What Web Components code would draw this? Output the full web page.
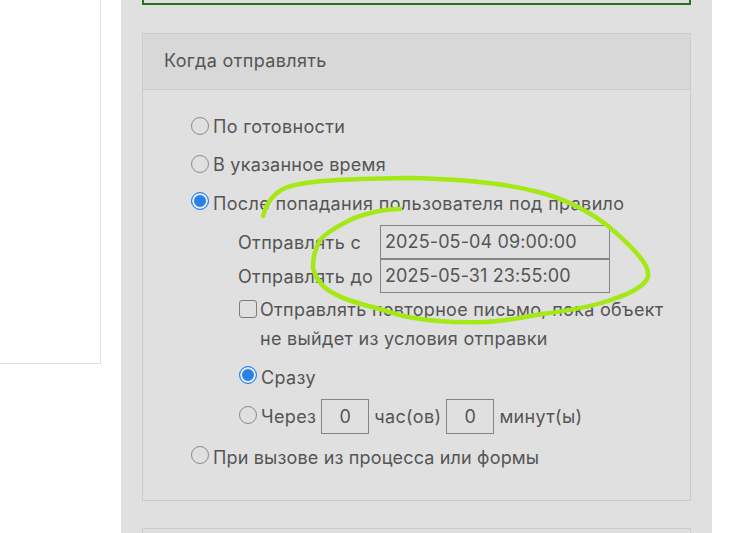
<!DOCTYPE html>
<html lang="ru">
<head>
<meta charset="utf-8">
<title>Когда отправлять</title>
<style>
  html, body { margin: 0; padding: 0; height: 533px; overflow: hidden; background: #fff; }
  body { font-family: Inter, "Noto Sans", sans-serif; font-size: 18px; letter-spacing: .35px; color: #555; }
</style>
</head>
<body>

<settings-page>
  <send-card title="Когда отправлять">
    <choice-row>По готовности</choice-row>
    <choice-row style="--h:39px;letter-spacing:.23px">В указанное время</choice-row>
    <choice-row checked style="--h:39px;--dot:-5px;margin-bottom:2px">После попадания пользователя под правило</choice-row>
    <sub-block>
      <date-row label="Отправлять с" value="2025-05-04 09:00:00"></date-row>
      <date-row label="Отправлять до" value="2025-05-31 23:55:00"></date-row>
      <check-row>Отправлять повторное письмо, пока объект<br>не выйдет из условия отправки</check-row>
      <choice-row checked style="--h:38px;--dot:-4px">Сразу</choice-row>
      <choice-row style="--h:40px;--dot:-2px">Через<num-box></num-box>час(ов)<num-box></num-box>минут(ы)</choice-row>
    </sub-block>
    <choice-row style="--h:42px;--dot:-4px;letter-spacing:.16px">При вызове из процесса или формы</choice-row>
  </send-card>
</settings-page>

<script>
class SettingsPage extends HTMLElement {
    constructor() {
        super();
        this.attachShadow({mode: "open"}).innerHTML = `
          <style>
            :host { display: grid; grid-template-columns: 101px 20px 591px 1fr; height: 533px; position: relative; overflow: hidden; }
            .side { height: 364px; box-sizing: border-box; background: #fff; border-right: 1px solid #ddd; border-bottom: 1px solid #ddd; }
            .main { grid-column: 3; background: #e0e0e0; padding: 0 21px; height: 533px; overflow: hidden; box-sizing: border-box; }
            .green { height: 5px; box-sizing: border-box; border: 2px solid #2a6f2a; border-top: 0; margin-bottom: 28px; }
            .next { height: 40px; box-sizing: border-box; border: 1px solid #ccc; margin-top: 27px; }
            svg { position: absolute; left: 0; top: 0; pointer-events: none; }
          </style>
          <div class="side"></div>
          <div class="main">
            <div class="green"></div>
            <slot></slot>
            <div class="next"></div>
          </div>
          <svg width="755" height="533" viewBox="0 0 755 533" fill="none">
            <path d="M263 216 C266 205 272 194 285 188 C302 181 340 179 408 178 C465 179 510 184 542 193 C570 201 590 212 608 226 C627 242 640 255 646 266 C650 275 648 280 642 285 C632 293 622 296 608 301 C590 307 565 311 542 314 C520 318 505 321 485 322 C455 323 430 321 408 317 C395 314 390 312 380 309 C360 304 345 300 333 293 C322 287 315 278 313 267 C313 255 316 248 320 240 C327 232 338 226 350 220 C362 214 385 209 400 209" stroke="#a4e816" stroke-width="4.500" stroke-linecap="round" stroke-linejoin="round"/>
          </svg>`;
    }
}

class SendCard extends HTMLElement {
    constructor() {
        super();
        this.attachShadow({mode: "open"}).innerHTML = `
          <style>
            :host { display: block; box-sizing: border-box; height: 468px; border: 1px solid #ccc; }
            .head { height: 56px; box-sizing: border-box; background: #d8d8d8; border-bottom: 1px solid #ccc; padding: 0 21px; line-height: 54px; }
            .body { padding: 17px 0 0 47px; }
          </style>
          <div class="head"></div>
          <div class="body"><slot></slot></div>`;
    }
    connectedCallback() {
        this.shadowRoot.querySelector(".head").textContent = this.getAttribute("title");
    }
}

class ChoiceRow extends HTMLElement {
    constructor() {
        super();
        this.attachShadow({mode: "open"}).innerHTML = `
          <style>
            :host { display: flex; align-items: center; gap: 4px; height: var(--h, 38px); white-space: nowrap; }
            .dot { flex: none; width: 18px; height: 18px; box-sizing: border-box; border-radius: 50%; border: 1.500px solid #8a8a8a; margin-top: var(--dot, -1px); margin-left: 1px; }
            :host([checked]) .dot { border-color: #2b80e6; background: #2b80e6; box-shadow: inset 0 0 0 2px #e8eef6; }
            .text { display: flex; align-items: center; gap: 5px; }
          </style>
          <span class="dot"></span><span class="text"><slot></slot></span>`;
    }
}

class SubBlock extends HTMLElement {
    constructor() {
        super();
        this.attachShadow({mode: "open"}).innerHTML = `
          <style>
            :host { display: block; padding-left: 48px; --dot: -1px; }
          </style>
          <slot></slot>`;
    }
}

class DateRow extends HTMLElement {
    constructor() {
        super();
        this.attachShadow({mode: "open"}).innerHTML = `
          <style>
            :host { display: flex; align-items: center; height: 34px; white-space: nowrap; }
            .label { width: 142px; flex: none; }
            .box { width: 230px; height: 34px; box-sizing: border-box; border: 1px solid #858585; padding: 0 4px; line-height: 32px; letter-spacing: .12px; }
          </style>
          <span class="label"></span><span class="box"></span>`;
    }
    connectedCallback() {
        this.shadowRoot.querySelector(".label").textContent = this.getAttribute("label");
        this.shadowRoot.querySelector(".box").textContent = this.getAttribute("value");
    }
}

class CheckRow extends HTMLElement {
    constructor() {
        super();
        this.attachShadow({mode: "open"}).innerHTML = `
          <style>
            :host { display: flex; gap: 3px; padding-top: 2px; line-height: 29px; height: 65px; box-sizing: border-box; white-space: nowrap; letter-spacing: .3px; }
            .box { flex: none; width: 18px; height: 18px; box-sizing: border-box; border: 1.500px solid #7d7d7d; border-radius: 3px; margin-top: 5px; margin-left: 1px; }
          </style>
          <span class="box"></span><span><slot></slot></span>`;
    }
}

class NumBox extends HTMLElement {
    constructor() {
        super();
        this.attachShadow({mode: "open"}).innerHTML = `<style>
            :host { display: block; flex: none; width: 48px; height: 35px; box-sizing: border-box; border: 1px solid #858585; text-align: center; line-height: 33px; white-space: normal; }
          </style>0`;
    }
}

customElements.define("settings-page", SettingsPage);
customElements.define("send-card", SendCard);
customElements.define("choice-row", ChoiceRow);
customElements.define("sub-block", SubBlock);
customElements.define("date-row", DateRow);
customElements.define("check-row", CheckRow);
customElements.define("num-box", NumBox);
</script>
</body>
</html>
